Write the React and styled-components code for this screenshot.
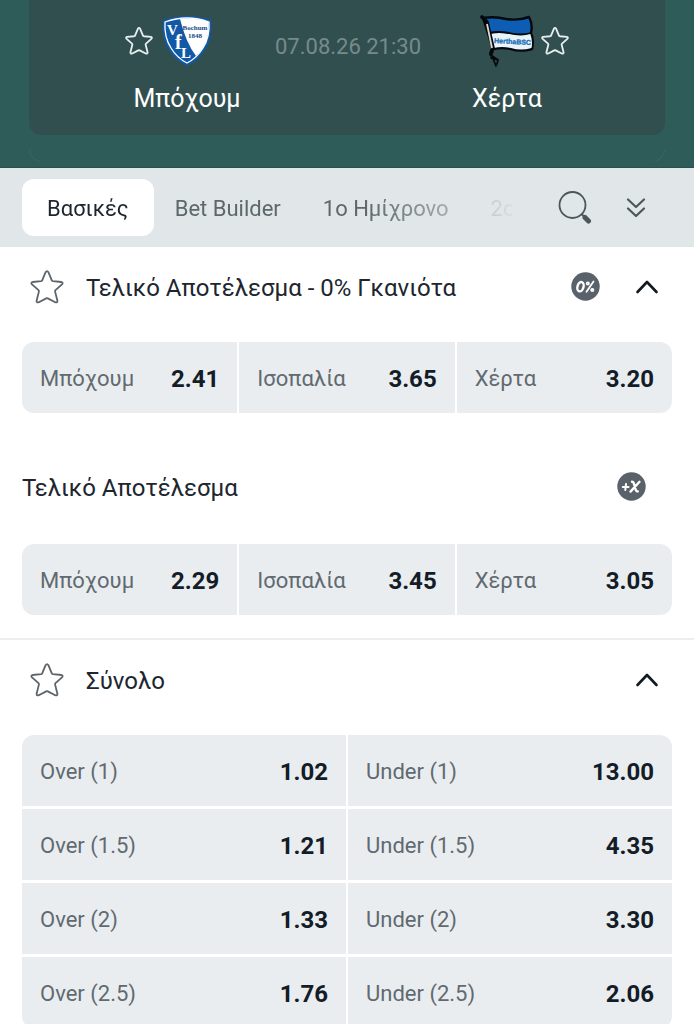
import React from 'react'
import styled, { createGlobalStyle } from 'styled-components'

const GlobalStyle = createGlobalStyle`
  * {
    box-sizing: border-box;
  }
  body {
    margin: 0;
    background: #fff;
    font-family: Roboto, "Noto Sans", sans-serif;
    color: #1d262f;
    scrollbar-width: none;
  }
  button {
    padding: 0;
    border: none;
    background: none;
    font: inherit;
    color: inherit;
    cursor: pointer;
  }
  svg {
    display: block;
  }
`

const Header = styled.header`
  padding: 0 29px 5px;
  background: #2e5c59;
  border-bottom: 1px solid #28504d;
`

const MatchCard = styled.div`
  display: flex;
  justify-content: center;
  height: 135px;
  padding-top: 12px;
  border-radius: 0 0 12px 12px;
  background: #324f50;
`

const CardEdge = styled.div`
  display: flex;
  justify-content: space-between;
  padding-top: 15px;
  color: #3b6663;
`

const Team = styled.div`
  width: 176px;
`

const TeamTop = styled.div`
  display: grid;
  grid-template-columns: 1fr 54px 1fr;
  column-gap: 7px;
  align-items: center;
  height: 58px;
`

const FavButton = styled.button`
  grid-column: ${({ $side }) => ($side === 'right' ? 3 : 1)};
  grid-row: 1;
  justify-self: ${({ $side }) => ($side === 'right' ? 'start' : 'end')};
  color: #e6efef;
`

const Crest = styled.div`
  grid-column: 2;
  grid-row: 1;
`

const TeamName = styled.div`
  margin-top: 13px;
  font-size: 25px;
  line-height: 32px;
  text-align: center;
  color: #fff;
`

const Kickoff = styled.time`
  width: 144px;
  padding-top: 19px;
  font-size: 22px;
  line-height: 32px;
  text-align: center;
  white-space: nowrap;
  color: #768b8b;
`

const TabBar = styled.nav`
  display: flex;
  align-items: center;
  height: 79px;
  padding: 0 22px;
  background: #e1e7e9;
`

const TabList = styled.div`
  display: flex;
  flex: 1;
  overflow: hidden;
  mask-image: linear-gradient(to right, #000 70%, transparent 102%);
`

const Tab = styled.button`
  flex-shrink: 0;
  height: 57px;
  padding: 2px ${({ $active }) => ($active ? 25 : 21)}px 0;
  border-radius: 12px;
  background: ${({ $active }) => ($active ? '#fff' : 'transparent')};
  color: ${({ $active }) => ($active ? '#1d262f' : '#5d676c')};
  font-size: 22px;
`

const TabTools = styled.div`
  display: flex;
  align-items: center;
  gap: 34px;
  margin-left: 46px;
  padding-right: 26px;
  color: #4c565d;
`

const Market = styled.section`
  padding: 0 22px 23px;
  border-bottom: 2px solid #eceef0;
`

const MarketHead = styled.div`
  display: flex;
  align-items: center;
  height: 95px;
  padding: 0 8px 16px;
`

const SubHead = styled.div`
  display: flex;
  align-items: center;
  justify-content: space-between;
  height: 131px;
  padding: 16px 26px 0 0;
`

const Title = styled.h2`
  flex: 1;
  margin: 0;
  padding-top: 2px;
  font-size: 24px;
  font-weight: 400;
  line-height: 32px;
`

const StarButton = styled.button`
  margin-right: 22px;
  color: #5c656c;
`

const ToggleButton = styled.button`
  margin: 0 5px 0 35px;
  color: #111a22;
`

const OddsGrid = styled.div`
  display: grid;
  grid-template-columns: repeat(${({ $cols }) => $cols}, 1fr);
  gap: 3px 2px;
  border-radius: 12px;
  overflow: hidden;
`

const OddButton = styled.button`
  display: flex;
  align-items: center;
  justify-content: space-between;
  height: 71px;
  padding: 2px 18px 0;
  background: #eaedf0;
`

const OddLabel = styled.span`
  font-size: 22px;
  color: #606a70;
`

const OddValue = styled.span`
  font-size: 24px;
  font-weight: 700;
  color: #131c27;
`

const Star = ({ size, width }) => (
  <svg width={size} height={size} viewBox="0 0 34 34" fill="none" stroke="currentColor" strokeWidth={width} strokeLinejoin="round">
    <path d="M15.6 2.2Q17 0 18.4 2.2L21.7 10.2Q22 11 22.9 11.2L31.4 12Q33.6 12.6 32 14.4L25.5 20.2Q24.9 20.8 25.1 21.6L27.4 30.7Q27.5 33 25.2 32.2L17.8 28.4Q17 28 16.2 28.4L8.8 32.2Q6.5 33 6.6 30.7L8.9 21.6Q9.1 20.8 8.5 20.2L2 14.4Q.4 12.6 2.6 12L11.1 11.2Q12 11 12.3 10.2Z" />
  </svg>
)

const BochumCrest = () => (
  <svg width="54" height="54" viewBox="0 0 54 54">
    <path d="M3 6Q15 2 27 2Q39 2 51 6Q53 24 45 36Q38 47 27 52Q16 47 9 36Q1 24 3 6Z" fill="#1159a6" />
    <path d="M5 8Q16 4 27 4Q38 4 49 8Q50 23 43 34Q37 44 27 49Q17 44 11 34Q4 23 5 8Z" fill="none" stroke="#fff" strokeWidth="1.3" />
    <path d="M20 5Q35 3 48.5 8Q50 24 42 35Q39 39 36 42Q26 29 20 5Z" fill="#fff" />
    <g fill="#fff" fontFamily="Liberation Serif, serif" fontWeight="700">
      <text x="7" y="21" fontSize="15">V</text>
      <text x="15" y="35" fontSize="20">f</text>
      <text x="21" y="44" fontSize="15">L</text>
    </g>
    <g fill="#174a83" fontFamily="Liberation Serif, serif" fontWeight="700" textAnchor="middle">
      <text x="35" y="16" fontSize="7">Bochum</text>
      <text x="35" y="24" fontSize="7">1848</text>
    </g>
  </svg>
)

const HerthaCrest = () => (
  <svg width="54" height="54" viewBox="0 0 54 54">
    <path d="M3 4Q15 2 26 5Q38 7 49 3Q53 10 51 19Q54 26 52 35Q41 38 31 35Q22 33 13 35Z" fill="#0d5db5" stroke="#05090c" strokeWidth="2.4" strokeLinejoin="round" />
    <path d="M9 20Q19 18 29 20Q41 22 50 19Q53 27 51.5 34Q41 37 31 34Q22 32 13.5 34Z" fill="#e9f3f8" />
    <path d="M9 19Q19 17 29 19Q41 22 51 19" fill="none" stroke="#05090c" strokeWidth="1.8" />
    <path d="M2 3L7 8L13 34L11 40" fill="none" stroke="#05090c" strokeWidth="3.6" strokeLinecap="round" strokeLinejoin="round" />
    <path d="M7 10L12 34" stroke="#dfd9d0" strokeWidth="1.8" />
    <path d="M11 36Q9 42 12 42L18 46L17 50M12 42L14 47L16 52M18 46L11 44" fill="none" stroke="#05090c" strokeWidth="1.8" strokeLinecap="round" />
    <text x="14" y="29" fontFamily="Liberation Sans, sans-serif" fontSize="7" fontWeight="700" fill="#1b6fb8" stroke="#1b6fb8" strokeWidth=".3" transform="rotate(3 14 29)">HerthaBSC</text>
  </svg>
)

const EdgeLeft = () => (
  <svg width="11" height="12" viewBox="0 0 11 12" fill="none" stroke="currentColor">
    <path d="M.5 0Q1 8 10 11.5" />
  </svg>
)

const EdgeRight = () => (
  <svg width="11" height="12" viewBox="0 0 11 12" fill="none" stroke="currentColor">
    <path d="M10.5 0Q10 8 1 11.5" />
  </svg>
)

const SearchIcon = () => (
  <svg width="34" height="34" viewBox="0 0 34 34" fill="none" stroke="currentColor" strokeLinecap="round">
    <circle cx="14.5" cy="14" r="13" strokeWidth="1.8" />
    <path d="M24 23.500L25.5 25" strokeWidth="2" />
    <path d="M27 26.500L30.500 30" strokeWidth="5" />
  </svg>
)

const DoubleChevron = () => (
  <svg width="20" height="22" viewBox="0 0 20 22" fill="none" stroke="currentColor" strokeWidth="2.2" strokeLinecap="round" strokeLinejoin="round">
    <path d="M2 2.500L10 10L18 2.500M2 11.500L10 19L18 11.500" />
  </svg>
)

const ChevronUp = () => (
  <svg width="24" height="24" viewBox="0 0 24 24" fill="none" stroke="currentColor" strokeWidth="2.600" strokeLinecap="round" strokeLinejoin="round">
    <path d="M2.500 17L12 7L21.500 17" />
  </svg>
)

const ZeroBadge = () => (
  <svg width="29" height="29" viewBox="0 0 29 29" fill="none" stroke="#fff" strokeWidth="2.4" strokeLinecap="round">
    <circle cx="14.5" cy="14.5" r="14.2" fill="#59616b" stroke="none" />
    <ellipse cx="9.5" cy="14.7" rx="3" ry="4.8" transform="rotate(16 9.5 14.7)" />
    <path d="M22.5 9.5L15.5 19.8" strokeWidth="1.8" />
    <circle cx="16.800" cy="11.500" r="1.200" strokeWidth="1.700" />
    <circle cx="21.300" cy="18" r="1.200" strokeWidth="1.700" />
  </svg>
)

const PlusBadge = () => (
  <svg width="29" height="29" viewBox="0 0 29 29" fill="none" stroke="#fff" strokeWidth="2.4" strokeLinecap="round">
    <circle cx="14.5" cy="14.5" r="14.2" fill="#59616b" stroke="none" />
    <path d="M5.800 15H11.500M9 12L8.300 18" strokeWidth="2" />
    <path d="M15 9.800Q16.500 9.800 17 12L18.600 17.200Q19.200 19.600 20.800 19.400M22.500 9.800L13.500 19.600" />
  </svg>
)

const tabs = ['Βασικές', 'Bet Builder', '1ο Ημίχρονο', '2ο Ημίχρονο']

const zeroMargin = [['Μπόχουμ', '2.41'], ['Ισοπαλία', '3.65'], ['Χέρτα', '3.20']]

const fullTime = [['Μπόχουμ', '2.29'], ['Ισοπαλία', '3.45'], ['Χέρτα', '3.05']]

const totals = [
  ['Over (1)', '1.02'],
  ['Under (1)', '13.00'],
  ['Over (1.5)', '1.21'],
  ['Under (1.5)', '4.35'],
  ['Over (2)', '1.33'],
  ['Under (2)', '3.30'],
  ['Over (2.5)', '1.76'],
  ['Under (2.5)', '2.06'],
]

const Odds = ({ items, cols }) => (
  <OddsGrid $cols={cols}>
    {items.map(([label, value]) => (
      <OddButton key={label}>
        <OddLabel>{label}</OddLabel>
        <OddValue>{value}</OddValue>
      </OddButton>
    ))}
  </OddsGrid>
)

export default function App() {
  return (
    <>
      <GlobalStyle />
      <Header>
        <MatchCard>
          <Team>
            <TeamTop>
              <FavButton $side="left" aria-label="Μπόχουμ"><Star size={28} width={2.2} /></FavButton>
              <Crest><BochumCrest /></Crest>
            </TeamTop>
            <TeamName>Μπόχουμ</TeamName>
          </Team>
          <Kickoff dateTime="2026-08-07T21:30">07.08.26 21:30</Kickoff>
          <Team>
            <TeamTop>
              <Crest><HerthaCrest /></Crest>
              <FavButton $side="right" aria-label="Χέρτα"><Star size={28} width={2.2} /></FavButton>
            </TeamTop>
            <TeamName>Χέρτα</TeamName>
          </Team>
        </MatchCard>
        <CardEdge>
          <EdgeLeft />
          <EdgeRight />
        </CardEdge>
      </Header>
      <TabBar>
        <TabList>
          {tabs.map((tab, i) => (
            <Tab key={tab} $active={i === 0}>{tab}</Tab>
          ))}
        </TabList>
        <TabTools>
          <button aria-label="Αναζήτηση"><SearchIcon /></button>
          <button aria-label="Ανάπτυξη"><DoubleChevron /></button>
        </TabTools>
      </TabBar>
      <main>
        <Market>
          <MarketHead>
            <StarButton aria-label="Αγαπημένο"><Star size={34} width={1.8} /></StarButton>
            <Title>Τελικό Αποτέλεσμα - 0% Γκανιότα</Title>
            <ZeroBadge />
            <ToggleButton aria-label="Σύμπτυξη"><ChevronUp /></ToggleButton>
          </MarketHead>
          <Odds items={zeroMargin} cols={3} />
          <SubHead>
            <Title>Τελικό Αποτέλεσμα</Title>
            <PlusBadge />
          </SubHead>
          <Odds items={fullTime} cols={3} />
        </Market>
        <Market>
          <MarketHead>
            <StarButton aria-label="Αγαπημένο"><Star size={34} width={1.8} /></StarButton>
            <Title>Σύνολο</Title>
            <ToggleButton aria-label="Σύμπτυξη"><ChevronUp /></ToggleButton>
          </MarketHead>
          <Odds items={totals} cols={2} />
        </Market>
      </main>
    </>
  )
}
